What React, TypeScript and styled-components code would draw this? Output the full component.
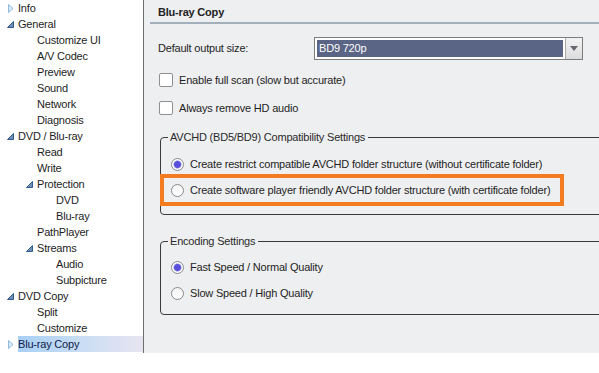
import React from "react";
import styled, { createGlobalStyle } from "styled-components";

const GlobalStyle = createGlobalStyle`
  html, body {
    margin: 0;
    padding: 0;
    background: #ffffff;
  }
  body {
    font-family: "Liberation Sans", Arial, sans-serif;
    font-size: 11px;
    letter-spacing: -0.2px;
    color: #1e1e1e;
  }
`;

type Node = { label: string; level: number; icon?: "open" | "closed"; selected?: boolean };

const tree: Node[] = [
  { label: "Info", level: 0, icon: "closed" },
  { label: "General", level: 0, icon: "open" },
  { label: "Customize UI", level: 1 },
  { label: "A/V Codec", level: 1 },
  { label: "Preview", level: 1 },
  { label: "Sound", level: 1 },
  { label: "Network", level: 1 },
  { label: "Diagnosis", level: 1 },
  { label: "DVD / Blu-ray", level: 0, icon: "open" },
  { label: "Read", level: 1 },
  { label: "Write", level: 1 },
  { label: "Protection", level: 1, icon: "open" },
  { label: "DVD", level: 2 },
  { label: "Blu-ray", level: 2 },
  { label: "PathPlayer", level: 1 },
  { label: "Streams", level: 1, icon: "open" },
  { label: "Audio", level: 2 },
  { label: "Subpicture", level: 2 },
  { label: "DVD Copy", level: 0, icon: "open" },
  { label: "Split", level: 1 },
  { label: "Customize", level: 1 },
  { label: "Blu-ray Copy", level: 0, icon: "closed", selected: true },
];

export default function App() {
  return (
    <>
      <GlobalStyle />
      <Window>
        <Sidebar>
          {tree.map((n) => (
            <TreeRow key={n.label} $level={n.level}>
              <Expander>
                {n.icon === "open" && (
                  <svg width="9" height="9" viewBox="0 0 9 9">
                    <path d="M7.5 1.5 L7.5 7.5 L1.5 7.5 Z" fill="#6f8fb5" stroke="#2e5c8c" strokeWidth="1" />
                  </svg>
                )}
                {n.icon === "closed" && (
                  <svg width="9" height="11" viewBox="0 0 9 11">
                    <path d="M2.5 1.5 L7 5.5 L2.5 9.5 Z" fill="#d6ebfb" stroke="#8fb9df" strokeWidth="1" />
                  </svg>
                )}
              </Expander>
              <TreeLabel $selected={!!n.selected}>{n.label}</TreeLabel>
            </TreeRow>
          ))}
        </Sidebar>
        <Panel>
          <Header>Blu-ray Copy</Header>
          <Content>
            <FieldRow>
              <FieldLabel>Default output size:</FieldLabel>
              <Combo>
                <ComboValue>BD9 720p</ComboValue>
                <ComboButton>
                  <svg width="8" height="5" viewBox="0 0 8 5">
                    <path d="M0 0 L8 0 L4 5 Z" fill="#666a70" />
                  </svg>
                </ComboButton>
              </Combo>
            </FieldRow>
            <CheckRow>
              <CheckBox />
              <span>Enable full scan (slow but accurate)</span>
            </CheckRow>
            <CheckRow>
              <CheckBox />
              <span>Always remove HD audio</span>
            </CheckRow>

            <Group $top={10} $padTop={8}>
              <Legend>AVCHD (BD5/BD9) Compatibility Settings</Legend>
              <RadioRow>
                <Radio $checked />
                <span>Create restrict compatible AVCHD folder structure (without certificate folder)</span>
              </RadioRow>
              <Highlight>
                <RadioRow>
                  <Radio />
                  <span>Create software player friendly AVCHD folder structure (with certificate folder)</span>
                </RadioRow>
              </Highlight>
            </Group>

            <Group $top={20} $padTop={7}>
              <Legend>Encoding Settings</Legend>
              <RadioRow>
                <Radio $checked />
                <span>Fast Speed / Normal Quality</span>
              </RadioRow>
              <RadioRow>
                <Radio />
                <span>Slow Speed / High Quality</span>
              </RadioRow>
            </Group>
          </Content>
        </Panel>
      </Window>
    </>
  );
}

const Window = styled.div`
  display: flex;
  width: 599px;
  height: 353px;
  overflow: hidden;
`;

const Sidebar = styled.div`
  width: 143px;
  flex-shrink: 0;
  background: #ffffff;
  border-right: 1px solid #6e6e6e;
  display: flex;
  flex-direction: column;
`;

const TreeRow = styled.div<{ $level: number }>`
  height: 16px;
  display: flex;
  align-items: center;
  padding-left: ${(p) => 2 + p.$level * 19}px;
`;

const Expander = styled.span`
  width: 16px;
  display: flex;
  align-items: center;
  justify-content: center;
`;

const TreeLabel = styled.span<{ $selected: boolean }>`
  flex: 1;
  height: 16px;
  line-height: 16px;
  white-space: nowrap;
  color: ${(p) => (p.$selected ? "#10204a" : "#1e1e1e")};
  background: ${(p) =>
    p.$selected ? "linear-gradient(to right, #a8cff4 0%, #c9ddf4 50%, #e8e4f1 100%)" : "transparent"};
`;

const Panel = styled.div`
  flex: 1;
  background: #eeeff1;
  display: flex;
  flex-direction: column;
`;

const Header = styled.div`
  height: 22px;
  line-height: 24px;
  margin-left: 6px;
  padding-left: 8px;
  border-bottom: 2px solid #a3afbb;
  font-weight: bold;
  color: #222;
`;

const Content = styled.div`
  padding: 12px 0 0 14px;
  display: flex;
  flex-direction: column;
`;

const FieldRow = styled.div`
  display: flex;
  align-items: center;
  height: 24px;
`;

const FieldLabel = styled.span`
  width: 156px;
`;

const Combo = styled.div`
  width: 269px;
  height: 23px;
  border: 1px solid #7c7c7c;
  background: #ffffff;
  display: flex;
  padding: 2px;
  box-sizing: border-box;
  gap: 2px;
`;

const ComboValue = styled.div`
  flex: 1;
  background: #5a6485;
  color: #ffffff;
  padding-left: 2px;
  line-height: 17px;
`;

const ComboButton = styled.div`
  width: 16px;
  margin: -2px -2px -2px 0;
  border-left: 1px solid #a9a9a9;
  background: linear-gradient(#f3f3f3, #dcdcdc);
  display: flex;
  align-items: center;
  justify-content: center;
`;

const CheckRow = styled.label`
  display: flex;
  align-items: center;
  gap: 6px;
  height: 26px;
  margin-top: 2px;
  &:first-of-type {
    margin-top: 7px;
  }
`;

const CheckBox = styled.span`
  width: 12px;
  height: 12px;
  border: 1px solid #8f8f8f;
  border-radius: 2px;
  background: #ffffff;
  margin-left: 1px;
`;

const Group = styled.fieldset<{ $top: number; $padTop: number }>`
  margin: ${(p) => p.$top}px -12px 0 2px;
  padding: ${(p) => p.$padTop}px 0 8px 0;
  border: 1px solid #3a3a3a;
  border-radius: 4px;
  display: flex;
  flex-direction: column;
`;

const Legend = styled.legend`
  padding: 0 3px 0 2px;
  margin-left: 7px;
  color: #2a2a2a;
`;

const RadioRow = styled.div`
  display: flex;
  align-items: center;
  gap: 6px;
  height: 26px;
  padding-left: 10px;
  white-space: nowrap;
`;

const Radio = styled.span<{ $checked?: boolean }>`
  width: 11px;
  height: 11px;
  border: 1px solid #8a8a8a;
  border-radius: 50%;
  background: ${(p) =>
    p.$checked
      ? "radial-gradient(circle, #5a4fd8 0 3px, #8f88e6 3.5px, #ffffff 4.5px)"
      : "linear-gradient(#f4f4f4, #ffffff)"};
`;

const Highlight = styled.div`
  border: 4px solid #f47b20;
  width: 396px;
  margin-left: -1px;
  margin-top: -3px;
  & > div {
    padding-left: 7px;
    height: 24px;
  }
`;
